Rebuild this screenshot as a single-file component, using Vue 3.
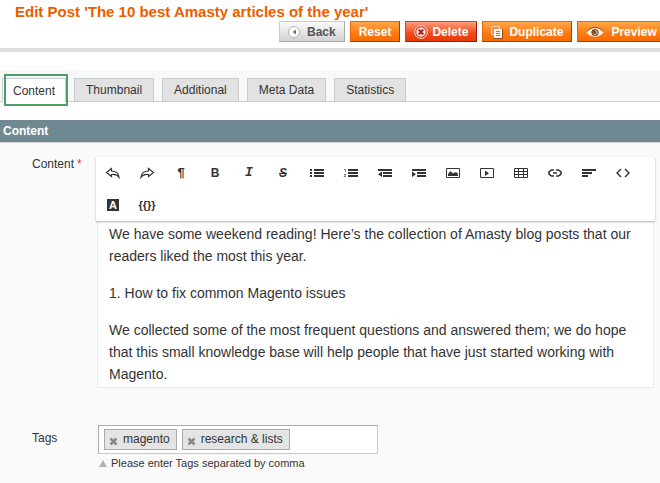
<template>
  <div class="page">
    <header class="page-head">
      <h1 class="page-head__title">Edit Post 'The 10 best Amasty articles of the year'</h1>
      <div class="page-head__buttons">
        <button type="button" class="btn btn--back">
          <svg class="btn__icon" width="15" height="14" viewBox="0 0 15 14">
            <circle cx="6" cy="7" r="5.500" fill="#fff" stroke="#b4b4b4" />
            <path d="M8 4.500v5L4.500 7z" fill="#777" />
          </svg>
          <span>Back</span>
        </button>
        <button type="button" class="btn">
          <span>Reset</span>
        </button>
        <button type="button" class="btn btn--delete">
          <svg class="btn__icon" width="14" height="16" viewBox="0 0 14 16">
            <circle cx="7" cy="8" r="6.400" fill="#d9452c" stroke="#ffd9cc" />
            <circle cx="7" cy="8" r="4.600" fill="#fff3ee" />
            <path d="M4.800 5.500l4.400 5M9.200 5.500l-4.400 5" stroke="#b9261a" stroke-width="2.200" />
          </svg>
          <span>Delete</span>
        </button>
        <button type="button" class="btn">
          <svg class="btn__icon" width="14" height="14" viewBox="0 0 14 14">
            <path d="M.5 1.500h8v8h-8z" fill="#e9905a" stroke="#ffd9b5" />
            <path d="M3.500 4.500h7v8h-7z" fill="#fff0df" stroke="#fff" />
            <path d="M5 6.500h4M5 8.500h4M5 10.500h4" stroke="#cf7c42" />
            <path d="M3 13.500h8.500V4" fill="none" stroke="#984b1d" />
          </svg>
          <span>Duplicate</span>
        </button>
        <button type="button" class="btn">
          <svg class="btn__icon" width="21" height="14" viewBox="0 0 21 14">
            <path d="M1 7.500C5 2 13 2 17 7.500 13 12.500 5 12.500 1 7.500z" fill="#fff4e5" stroke="#fff4e5" />
            <path d="M1 6.500C5 1 13 1 17 6.500" fill="none" stroke="#a84a10" />
            <circle cx="9" cy="7.500" r="3.600" fill="#7d4a2c" />
            <path d="M9 5.500a2 2 0 1 1-1.700 3" fill="none" stroke="#f5d6b8" />
          </svg>
          <span>Preview</span>
        </button>
      </div>
    </header>

    <nav class="tabs" role="tablist">
      <button
        v-for="tab in tabs"
        :key="tab"
        type="button"
        role="tab"
        class="tabs__item"
        :class="{ 'tabs__item--active': tab === activeTab }"
        :aria-selected="tab === activeTab"
        @click="activeTab = tab"
      >
        {{ tab }}
      </button>
    </nav>

    <section class="fieldset">
      <h2 class="fieldset__title">Content</h2>
      <div class="fieldset__body">
        <div class="row">
          <span id="content-label" class="row__label">Content<span class="row__required">*</span></span>
          <div class="editor">
            <div class="editor__toolbar" role="toolbar">
              <button
                v-for="tool in tools"
                :key="tool.name"
                type="button"
                class="editor__tool"
                :aria-label="tool.name"
              >
                <span v-if="tool.text" class="glyph" :class="'glyph--' + tool.name">{{ tool.text }}</span>
                <svg v-else width="16" height="14" viewBox="0 0 16 14">
                  <path v-if="tool.fill" :d="tool.fill" fill="#333" />
                  <path v-if="tool.line" :d="tool.line" fill="none" stroke="#333" :stroke-width="tool.weight || 1" />
                </svg>
              </button>
            </div>
            <div
              class="editor__area"
              contenteditable="true"
              role="textbox"
              aria-multiline="true"
              aria-labelledby="content-label"
              spellcheck="false"
            >
              <p>We have some weekend reading! Here’s the collection of Amasty blog posts that our readers liked the most this year.</p>
              <p>1. How to fix common Magento issues</p>
              <p>We collected some of the most frequent questions and answered them; we do hope that this small knowledge base will help people that have just started working with Magento.</p>
            </div>
          </div>
        </div>

        <div class="row row--tags">
          <label for="tags" class="row__label">Tags</label>
          <div class="tags">
            <div class="tags__box">
              <span v-for="tag in tags" :key="tag" class="tag">
                <button type="button" class="tag__remove" :aria-label="tag" @click="removeTag(tag)">
                  <svg width="9" height="9" viewBox="0 0 9 9">
                    <path d="M1.500 1.500l6 6M7.500 1.500l-6 6" stroke="#888" stroke-width="2.500" />
                  </svg>
                </button>
                <span>{{ tag }}</span>
              </span>
              <input id="tags" v-model="draft" type="text" class="tags__input" @keydown.enter="addTag" />
            </div>
            <p class="tags__note">
              <svg width="8" height="7" viewBox="0 0 8 7"><path d="M4 0l4 7H0z" fill="#a9b5b9" /></svg>
              Please enter Tags separated by comma
            </p>
          </div>
        </div>
      </div>
    </section>
  </div>
</template>

<script setup>
 import { ref } from 'vue'

 const tabs = ['Content', 'Thumbnail', 'Additional', 'Meta Data', 'Statistics']
 const activeTab = ref('Content')

 const tags = ref(['magento', 'research & lists'])
 const draft = ref('')

 const tools = [
   { name: 'undo', line: 'M6.500 2.500L1.500 6.500l5 4V8.500c3.500-.5 6 .3 7.500 2.800 0-4-3-6.300-7.500-6.300z', weight: 1.2 },
   { name: 'redo', line: 'M9.500 2.500l5 4-5 4V8.500c-3.500-.5-6 .3-7.500 2.800 0-4 3-6.300 7.500-6.300z', weight: 1.2 },
   { name: 'paragraph', text: '¶' },
   { name: 'bold', text: 'B' },
   { name: 'italic', text: 'I' },
   { name: 'strike', text: 'S' },
   { name: 'bullets', fill: 'M1 3h2v2H1zM1 6h2v2H1zM1 9h2v2H1zM5 3h10v2H5zM5 6h10v2H5zM5 9h10v2H5z' },
   {
     name: 'numbers',
     fill: 'M5 3h10v2H5zM5 6h10v2H5zM5 9h10v2H5z',
     line: 'M1 3.500h1.500V6M1 8.500h2l-2 2h2',
     weight: 0.6
   },
   { name: 'outdent', fill: 'M1 3h14v2H1zM6 6h9v2H6zM6 9h9v2H6zM5 5.500v5.500L1 8.200z' },
   { name: 'indent', fill: 'M1 3h14v2H1zM6 6h9v2H6zM6 9h9v2H6zM1 5.500v5.500l4-2.800z' },
   { name: 'image', line: 'M1.500 2.500h13v9h-13z', fill: 'M3 10V8l2.500-3L8 7.500 10 6l1 1 1-1 1 2.500V10z' },
   { name: 'video', line: 'M1.500 2.500h13v9h-13z', fill: 'M6 4.500v5.500l4-2.800z' },
   { name: 'table', line: 'M1.500 2.500h13v9h-13zM1 5.500h14M1 8.500h14M5.500 2v10M10.500 2v10' },
   {
     name: 'link',
     line: 'M7 4H4.500L2 6v2l2.500 2H7M9 4h2.500L14 6v2l-2.500 2H9M6 7h4',
     weight: 1.6
   },
   { name: 'align', fill: 'M1 3h14v2H1zM1 6h10v2H1zM1 9h6v2H1z' },
   { name: 'html', line: 'M6 3L2 7l4 4M10 3l4 4-4 4', weight: 1.4 },
   { name: 'color', text: 'A' },
   { name: 'variable', text: '{{}}' }
 ]

 function addTag() {
   const value = draft.value.trim()
   if (value && !tags.value.includes(value)) {
     tags.value.push(value)
   }
   draft.value = ''
 }

 function removeTag(tag) {
   tags.value = tags.value.filter((item) => item !== tag)
 }
</script>

<style>
body {
  margin: 0;
  background: #fafafa;
}
</style>

<style scoped>
.page {
  overflow: hidden;
  color: #333;
  font-family: "Liberation Sans", Arial, sans-serif;
  font-size: 12px;
}

button,
input {
  margin: 0;
  color: inherit;
  font-family: inherit;
  font-size: 12px;
}

.page-head {
  padding: 2px 0 6px 15px;
  border-bottom: 4px solid #dfdfdf;
  background: #fff;
}

.page-head__title {
  margin: 0;
  color: #eb5e00;
  font-size: 15px;
  line-height: 19px;
}

.page-head__buttons {
  display: flex;
  gap: 5px;
  padding-left: 264px;
}

.btn {
  display: flex;
  flex: none;
  align-items: center;
  gap: 4px;
  height: 21px;
  padding: 0 8px;
  border: 1px solid;
  border-color: #ed6502 #a04300 #a04300 #ed6502;
  background: linear-gradient(#ffa64a, #fb7a12 60%, #f66c00);
  color: #fff;
  font-weight: bold;
  white-space: nowrap;
}

.btn__icon {
  flex: none;
}

.btn--back {
  border-color: #ccc #aaa #aaa #ccc;
  background: linear-gradient(#fafafa, #d2d2d2);
  color: #555;
}

.btn--delete {
  border-color: #d8412a #a01800 #a01800 #d8412a;
  background: linear-gradient(#ff9c7c, #ee4a1c 60%, #e83a08);
}

.tabs {
  display: flex;
  gap: 8px;
  padding: 8px 2px 0;
  border-top: 18px solid #fff;
  border-bottom: 1px solid #c8cdd0;
  background: #f8f8f8;
}

.tabs__item {
  position: relative;
  height: 23px;
  padding: 0 10px;
  border: 1px solid #c8cdd0;
  border-bottom: 0;
  background: #e2e2e2;
}

.tabs__item:not(.tabs__item--active) {
  padding: 0 11px;
}

.tabs__item--active {
  height: 24px;
  margin-bottom: -1px;
  background: #fff;
}

.tabs__item--active::after {
  content: '';
  position: absolute;
  inset: -5px -3px -4px 1px;
  border: 2px solid #4aa168;
}

.fieldset {
  border-top: 18px solid #fff;
}

.fieldset__title {
  margin: 0;
  padding: 0 3px;
  border-bottom: 1px solid #d6d6d6;
  background: #6f8992;
  color: #fff;
  font-size: 12px;
  line-height: 22px;
}

.fieldset__body {
  padding: 14px 5px 14px 32px;
}

.row {
  display: flex;
}

.row--tags {
  margin-top: 37px;
}

.row__label {
  flex: none;
  width: 64px;
  line-height: 14px;
}

.row__required {
  margin-left: 3px;
  color: #d33;
}

.editor {
  flex: 1;
  min-width: 0;
}

.editor__toolbar {
  position: relative;
  display: flex;
  flex-wrap: wrap;
  background: #fff;
  box-shadow: 0 1px 2px rgba(0, 0, 0, 0.3);
}

.editor__tool {
  display: flex;
  align-items: center;
  justify-content: center;
  width: 34px;
  height: 32px;
  padding: 0;
  border: 0;
  background: none;
}

.glyph {
  font-size: 12px;
  font-weight: bold;
  line-height: 12px;
}

.glyph--paragraph {
  font-size: 13px;
}

.glyph--italic {
  font-family: "Liberation Mono", monospace;
  font-size: 13px;
  font-style: italic;
}

.glyph--strike {
  font-style: italic;
  text-decoration: line-through;
}

.glyph--color {
  width: 12px;
  background: #333;
  color: #fff;
  font-size: 11px;
}

.glyph--variable {
  font-size: 11px;
}

.editor__area {
  margin: 0 1px;
  padding: 2px 11px;
  border: 1px solid #ebebeb;
  border-top: 0;
  outline: 0;
  background: #fff;
  font-size: 14px;
  line-height: 22px;
}

.editor__area p {
  margin: 0 0 15px;
}

.editor__area p:last-child {
  margin-bottom: 0;
}

.row--tags .row__label {
  padding-top: 6px;
}

.tags {
  width: 280px;
  margin-left: 2px;
}

.tags__box {
  display: flex;
  gap: 5px;
  padding: 3px 5px;
  border: 1px solid;
  border-color: #aaa #c8c8c8 #c8c8c8 #aaa;
  background: #fff;
}

.tag {
  display: flex;
  flex: none;
  align-items: center;
  gap: 5px;
  padding: 0 6px 0 4px;
  border: 1px solid #aaa;
  background: #e4e4e4;
  line-height: 19px;
}

.tag__remove {
  display: flex;
  padding: 3px 0 0;
  border: 0;
  background: none;
}

.tags__input {
  flex: 1;
  min-width: 0;
  padding: 0;
  border: 0;
  outline: 0;
  background: none;
}

.tags__note {
  display: flex;
  align-items: center;
  gap: 4px;
  margin: 3px 0 0;
  padding-left: 1px;
  font-size: 11px;
  line-height: 13px;
  white-space: nowrap;
}
</style>
